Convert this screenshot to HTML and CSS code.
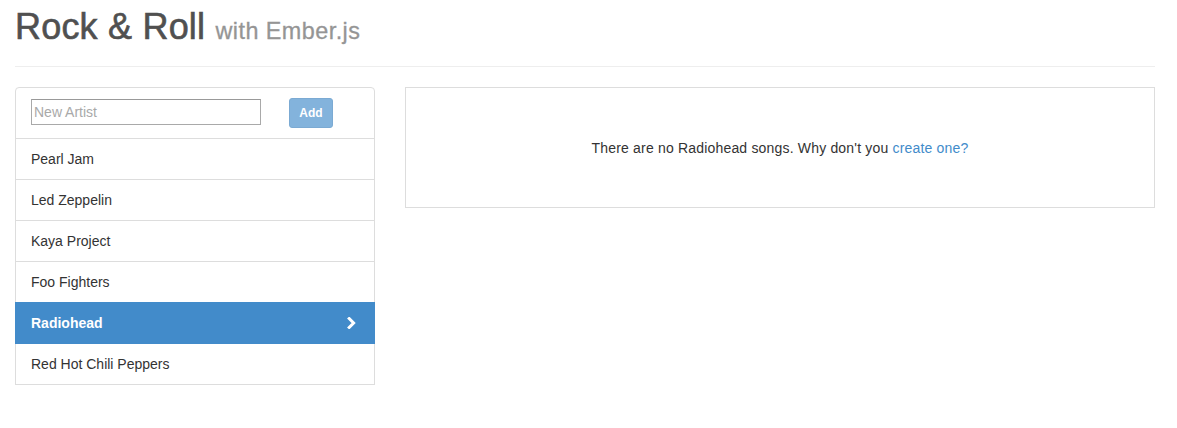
FILE: index.html
```html
<!DOCTYPE html>
<html lang="en">
<head>
<meta charset="utf-8">
<title>Rock &amp; Roll</title>
<link rel="stylesheet" href="styles.css">
</head>
<body>
<div class="container">
  <header class="page-header">
    <h1>Rock &amp; Roll <small>with Ember.js</small></h1>
  </header>
  <div class="layout">
    <div class="list-group">
      <div class="list-group-item form-row">
        <input class="artist-input" type="text" placeholder="New Artist">
        <button class="btn-add" type="button" disabled>Add</button>
      </div>
      <a class="list-group-item" href="#">Pearl Jam</a>
      <a class="list-group-item" href="#">Led Zeppelin</a>
      <a class="list-group-item" href="#">Kaya Project</a>
      <a class="list-group-item" href="#">Foo Fighters</a>
      <a class="list-group-item active" href="#">Radiohead
        <svg class="chevron" width="12" height="12" viewBox="0 0 12 12" aria-hidden="true"><path d="M3.2 1.6 L7.6 6 L3.2 10.4" fill="none" stroke="#fff" stroke-width="3" stroke-linecap="square" stroke-linejoin="miter"/></svg>
      </a>
      <a class="list-group-item" href="#">Red Hot Chili Peppers</a>
    </div>
    <div class="songs-panel">
      <p class="empty">There are no Radiohead songs. Why don't you <a href="#" class="create-link">create one?</a></p>
    </div>
  </div>
</div>
</body>
</html>
```

FILE: styles.css
```css
* {
  box-sizing: border-box;
}

html, body {
  margin: 0;
  padding: 0;
  background: #fff;
}

body {
  font-family: "Liberation Sans", Arial, Helvetica, sans-serif;
  font-size: 14px;
  line-height: 20px;
  color: #333;
  min-height: 428px;
}

.container {
  width: 1170px;
  padding: 0 15px;
}

.page-header {
  padding: 7px 0 9px;
  border-bottom: 1px solid #eee;
  margin-bottom: 20px;
}

.page-header h1 {
  margin: 0 0 10px;
  font-size: 36px;
  line-height: 1.1;
  font-weight: normal;
  color: #505050;
  -webkit-text-stroke: 0.6px #505050;
  letter-spacing: 0.2px;
}

.page-header h1 small {
  font-size: 65%;
  color: #959595;
  font-weight: normal;
  -webkit-text-stroke: 0.3px #959595;
  letter-spacing: 0.45px;
}

.layout {
  display: grid;
  grid-template-columns: 360px 750px;
  column-gap: 30px;
  align-items: start;
}

.list-group {
  display: flex;
  flex-direction: column;
}

.list-group-item {
  display: flex;
  align-items: center;
  justify-content: space-between;
  padding: 10px 15px;
  border: 1px solid #ddd;
  margin-bottom: -1px;
  background: #fff;
  color: #333;
  text-decoration: none;
  line-height: 20px;
  position: relative;
}

.list-group-item:first-child {
  border-top-left-radius: 4px;
  border-top-right-radius: 4px;
}

.list-group-item:last-child {
  margin-bottom: 0;
}

.list-group-item.active {
  background: #428bca;
  border-color: #428bca;
  color: #fff;
  font-weight: bold;
  z-index: 2;
}

.chevron {
  display: block;
  margin-right: 1px;
}

.form-row {
  justify-content: flex-start;
}

.artist-input {
  width: 230px;
  height: 26px;
  margin: -1px 0 0;
  padding: 0 2px;
  border: 1px solid #a9a9a9;
  border-top-color: #999;
  font-family: "Liberation Sans", Arial, sans-serif;
  font-size: 14px;
  color: #333;
  background: #fff;
  border-radius: 0;
}

.artist-input::placeholder {
  color: #a9a9a9;
}

.btn-add {
  margin-left: 28px;
  width: 44px;
  height: 30px;
  padding: 0;
  border: 1px solid #357ebd;
  border-radius: 3px;
  background: #428bca;
  color: #fff;
  font-family: "Liberation Sans", Arial, sans-serif;
  font-size: 12px;
  font-weight: bold;
  line-height: 18px;
  opacity: 0.65;
}

.songs-panel {
  border: 1px solid #ddd;
  padding: 50px 15px 49px;
  text-align: center;
}

.empty {
  margin: 0;
  line-height: 20px;
  letter-spacing: 0.18px;
}

.create-link {
  color: #428bca;
  text-decoration: none;
}
```
